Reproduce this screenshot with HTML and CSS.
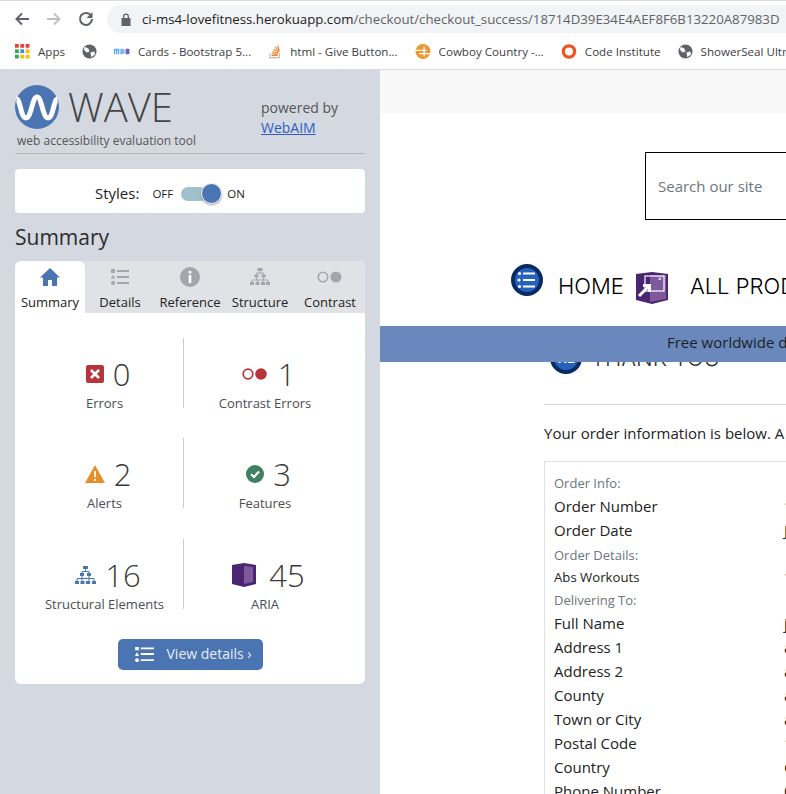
FILE: index.html
```html
<!DOCTYPE html>
<html lang="en">
<head>
    <meta charset="UTF-8">
    <meta name="viewport" content="width=device-width, initial-scale=1.0">
    <title>WAVE - Love Fitness checkout</title>
    <link rel="stylesheet" href="styles.css">
</head>
<body>
    <div class="toolbar">
        <svg class="nav-arrow" viewBox="0 0 16 16"><path d="M15 8H3M8 2.5 2.5 8 8 13.5" fill="none" stroke="#5f6368" stroke-width="2"/></svg>
        <svg class="nav-arrow" viewBox="0 0 16 16"><path d="M1 8h12M8 2.5 13.5 8 8 13.5" fill="none" stroke="#bdc1c6" stroke-width="2"/></svg>
        <svg class="nav-arrow" viewBox="0 0 16 16"><path d="M13 4.6A6 6 0 1 0 14 8" fill="none" stroke="#5f6368" stroke-width="2"/><path d="M14.5 1v6h-6z" fill="#5f6368"/></svg>
        <div class="address">
            <svg class="lock" viewBox="0 0 10 13"><path d="M2 5V3.5a3 3 0 0 1 6 0V5h1.500v8H.5V5zm1.300 0h3.400V3.500a1.700 1.700 0 0 0-3.400 0z" fill="#5f6368"/></svg>
            <span class="url"><span class="host">ci-ms4-lovefitness.herokuapp.com</span>/checkout/checkout_success/18714D39E34E4AEF8F6B13220A87983D</span>
        </div>
    </div>

    <div class="bookmarks">
        <a class="bookmark">
            <svg class="bm-icon" viewBox="0 0 14 14">
                <rect x="0" y="0" width="3.500" height="3.500" fill="#ea4335"/><rect x="5" y="0" width="3.500" height="3.500" fill="#ea4335"/><rect x="10" y="0" width="3.500" height="3.500" fill="#ea4335"/>
                <rect x="0" y="5" width="3.500" height="3.500" fill="#34a853"/><rect x="5" y="5" width="3.500" height="3.500" fill="#4285f4"/><rect x="10" y="5" width="3.500" height="3.500" fill="#fbbc05"/>
                <rect x="0" y="10" width="3.500" height="3.500" fill="#34a853"/><rect x="5" y="10" width="3.500" height="3.500" fill="#fbbc05"/><rect x="10" y="10" width="3.500" height="3.500" fill="#fbbc05"/>
            </svg>
            Apps
        </a>
        <a class="bookmark"><svg class="bm-icon" viewBox="0 0 16 16"><circle cx="8" cy="8" r="7.500" fill="#5f6368"/><path d="M3 3l4 2 1 3-3 1-3-3zM9 9l4-1 1 3-4 3z" fill="#fff"/></svg></a>
        <a class="bookmark"><svg class="bm-icon wide" viewBox="0 0 18 8"><path d="M0 1h6v6H4.500V3H3.700v4H2.300V3H1.500v4H0z" fill="#5dadec"/><path d="M7 1h3.500L12 3v2l-1.500 2H7z" fill="#7fb8ee"/><path d="M13 1h3.500L18 2.500 17 4l1 1.500L16.500 7H13z" fill="#6f5fc7"/></svg>Cards - Bootstrap 5...</a>
        <a class="bookmark"><svg class="bm-icon narrow" viewBox="0 0 16 16"><path d="M2 10v5h11v-5" fill="none" stroke="#bcbbbb" stroke-width="1.300"/><path d="M4 12.500h7M4.200 10.300l6.800.8M5 8l6.500 2M6.500 5.500l5.500 3.500M8.500 3l4 5M11 1l2 6.500" fill="none" stroke="#f48024" stroke-width="1.300"/></svg>html - Give Button...</a>
        <a class="bookmark"><svg class="bm-icon wide" viewBox="0 0 16 16"><circle cx="8" cy="8" r="8" fill="#f0962e"/><path d="M0 6h12v1.500H0zM4 9.500h12V11H4zM8.500 3h1.500v10H8.500z" fill="#fff"/></svg>Cowboy Country -...</a>
        <a class="bookmark"><svg class="bm-icon wide" viewBox="0 0 16 16"><circle cx="8" cy="8" r="6" fill="none" stroke="#f4511e" stroke-width="3.500"/></svg>Code Institute</a>
        <a class="bookmark"><svg class="bm-icon" viewBox="0 0 16 16"><circle cx="8" cy="8" r="7.500" fill="#5f6368"/><path d="M3 3l4 2 1 3-3 1-3-3zM9 9l4-1 1 3-4 3z" fill="#fff"/></svg>ShowerSeal Ultra</a>
    </div>

    <div class="main">
        <aside class="wave">
            <div class="wave-head">
                <div class="brand">
                    <div class="brand-row">
                        <svg class="wave-logo" viewBox="0 0 44 44"><circle cx="22" cy="22" r="22" fill="#4b74b2"/><path d="M1.500 14c4 0 4 19 9.500 19S17 12 22 12s5.500 21 11 21 5.500-19 9.500-19" fill="none" stroke="#fff" stroke-width="5"/></svg>
                        <span class="wave-title">WAVE</span>
                    </div>
                    <div class="tagline">web accessibility evaluation tool</div>
                </div>
                <div class="powered">powered by<br><a href="#">WebAIM</a></div>
            </div>

            <div class="styles-card">
                <span class="styles-label">Styles:</span>
                <span class="switch-text">OFF</span>
                <span class="switch"><span class="knob"></span></span>
                <span class="switch-text">ON</span>
            </div>

            <h2 class="panel-title">Summary</h2>

            <div class="panel">
                <div class="tabs">
                    <div class="tab active">
                        <svg class="tab-icon" viewBox="0 0 20 20"><path d="M10 1 0 10.500h3V19h5v-6h4v6h5v-8.500h3z" fill="#4b74b2"/></svg>
                        Summary
                    </div>
                    <div class="tab">
                        <svg class="tab-icon" viewBox="0 0 20 20"><path d="M1 2h4v4H1zM7 3h12v2H7zM3 8l2.200 3.500H.8zM7 9h12v2H7zM7 15h12v2H7z" fill="#a3a6ab"/><circle cx="3" cy="16" r="2" fill="#a3a6ab"/></svg>
                        Details
                    </div>
                    <div class="tab">
                        <svg class="tab-icon" viewBox="0 0 20 20"><circle cx="10" cy="10" r="10" fill="#a3a6ab"/><path d="M8.700 4h2.600v2.500H8.700zM8.700 8h2.600v8H8.700z" fill="#fff"/></svg>
                        Reference
                    </div>
                    <div class="tab">
                        <svg class="tab-icon" viewBox="0 0 20 20"><path d="M7.500 1h5v3h-5zM4.500 7.500h4v3h-4zM11.500 7.500h4v3h-4zM0 15h4v3H0zM5.500 15h4v3h-4zM11 15h4v3h-4zM16 15h4v3h-4z" fill="#a3a6ab"/><path d="M10 4v2.500M6.500 6v1.500M13.500 6v1.500M6.500 6h7M2 15v-2h16v2M6.500 10.500V13M13.500 10.500V13M7.500 13v2M13 13v2" fill="none" stroke="#a3a6ab"/></svg>
                        Structure
                    </div>
                    <div class="tab">
                        <svg class="tab-icon contrast" viewBox="0 0 26 12"><circle cx="6" cy="6" r="4.700" fill="none" stroke="#a3a6ab" stroke-width="1.600"/><circle cx="19" cy="6" r="5.500" fill="#a3a6ab"/></svg>
                        Contrast
                    </div>
                </div>

                <div class="stats">
                    <div class="stat">
                        <div class="stat-top">
                            <svg class="stat-icon" viewBox="0 0 18 18"><rect width="18" height="18" rx="2" fill="#b7353a"/><path d="M5 5l8 8M13 5l-8 8" stroke="#fff" stroke-width="2.600"/></svg>
                            <span class="stat-num">0</span>
                        </div>
                        <div class="stat-label">Errors</div>
                    </div>
                    <div class="stat">
                        <div class="stat-top wide-gap">
                            <svg class="stat-icon contrast-err" viewBox="0 0 25 12"><circle cx="6" cy="6" r="4.800" fill="none" stroke="#b7353a" stroke-width="1.700"/><circle cx="19" cy="6" r="5.800" fill="#b7353a"/></svg>
                            <span class="stat-num">1</span>
                        </div>
                        <div class="stat-label">Contrast Errors</div>
                    </div>
                    <div class="stat">
                        <div class="stat-top">
                            <svg class="stat-icon alert" viewBox="0 0 20 18"><path d="M10 0 20 18H0z" fill="#e68f28"/><path d="M9 6h2l-.3 6.500H9.300zM9 14h2v2H9z" fill="#fff"/></svg>
                            <span class="stat-num">2</span>
                        </div>
                        <div class="stat-label">Alerts</div>
                    </div>
                    <div class="stat">
                        <div class="stat-top">
                            <svg class="stat-icon" viewBox="0 0 18 18"><circle cx="9" cy="9" r="9" fill="#3f7f62"/><path d="M5 9.300l3 2.700 5-5.500" fill="none" stroke="#fff" stroke-width="2.200"/></svg>
                            <span class="stat-num">3</span>
                        </div>
                        <div class="stat-label">Features</div>
                    </div>
                    <div class="stat">
                        <div class="stat-top">
                            <svg class="stat-icon struct" viewBox="0 0 21 20"><path d="M8 1h5v3H8zM5 8h4v3H5zM12 8h4v3h-4zM0 16h4v3H0zM5.500 16h4v3h-4zM11 16h4v3h-4zM17 16h4v3h-4z" fill="#4b74b2"/><path d="M10.500 4v2.500M7 6.500h7M7 6.500V8M14 6.500V8M2 16v-2.500h17V16M7 11v5M14 11v5" fill="none" stroke="#4b74b2"/></svg>
                            <span class="stat-num">16</span>
                        </div>
                        <div class="stat-label">Structural Elements</div>
                    </div>
                    <div class="stat">
                        <div class="stat-top wide-gap">
                            <svg class="stat-icon aria" viewBox="0 0 24 24"><path d="M0 2 12 0l12 2v19l-12 3-12-3z" fill="#4b2571"/><path d="M12 3l9 1v15l-9 2z" fill="#7e5a9b"/></svg>
                            <span class="stat-num">45</span>
                        </div>
                        <div class="stat-label">ARIA</div>
                    </div>
                </div>

                <div class="details-row">
                    <a class="details-btn">
                        <svg class="btn-icon" viewBox="0 0 20 16"><path d="M0 0h4v3.500H0zM6 .5h14v2H6zM2 5.500l2.200 4H-.2zM6 6.500h14v2H6zM6 13h14v2H6z" fill="#fff"/><circle cx="2" cy="14" r="2" fill="#fff"/></svg>
                        <span class="btn-text">View details ›</span>
                    </a>
                </div>
            </div>
        </aside>

        <main class="page">
            <div class="page-strip"></div>
            <div class="search-row">
                <div class="search-box">Search our site</div>
            </div>
            <nav class="site-nav">
                <svg class="nav-icon list-icon" viewBox="0 0 32 32"><circle cx="16" cy="16" r="14" fill="#2563bb" stroke="#0b2a63" stroke-width="4"/><path d="M12 9.500h12M12 16h12M12 22.500h12" stroke="#fff" stroke-width="2.200"/><circle cx="8.500" cy="9.500" r="1.600" fill="#fff"/><circle cx="8" cy="16" r="1.600" fill="#fff"/><circle cx="8.500" cy="22.500" r="1.600" fill="#fff"/></svg>
                <span class="nav-link">HOME</span>
                <svg class="nav-icon box-icon" viewBox="0 0 32 32"><path d="M0 2 16 0l16 2v26l-16 4-16-4z" fill="#4b2571"/><path d="M14 3l16 0v24l-16 3z" fill="#7e5a9b"/><rect x="9" y="4" width="19" height="15" fill="none" stroke="#fff" stroke-width="1.200"/><path d="M25 5.500l-2.500 2.500M22.500 5.500 25 8" stroke="#fff"/><path d="M3 24 13 14M7 13.500h6.500V20" fill="none" stroke="#fff" stroke-width="3"/></svg>
                <span class="nav-link">ALL PRODUCTS</span>
            </nav>
            <div class="banner">Free worldwide delivery on all orders over $50</div>
            <div class="content">
                <div class="thanks">
                    <svg class="thanks-icon" viewBox="0 0 32 32"><circle cx="16" cy="16" r="14" fill="#2563bb" stroke="#0b2a63" stroke-width="4"/><text class="h2-badge" x="16" y="21" text-anchor="middle">H2</text></svg>
                    <span class="thanks-text">THANK YOU</span>
                </div>
                <hr class="rule">
                <p class="intro">Your order information is below. A confirmation email will be sent to you.</p>
                <div class="order">
                    <div class="order-head">Order Info:</div>
                    <div class="order-row"><span>Order Number</span><span>18714D39E34E4AEF</span></div>
                    <div class="order-row"><span>Order Date</span><span>Jan 12 2022</span></div>
                    <div class="order-head spaced">Order Details:</div>
                    <div class="order-row small"><span>Abs Workouts</span><span>1 x 9.99</span></div>
                    <div class="order-head">Delivering To:</div>
                    <div class="order-row"><span>Full Name</span><span>jane doe</span></div>
                    <div class="order-row"><span>Address 1</span><span>aaa</span></div>
                    <div class="order-row"><span>Address 2</span><span>aaa</span></div>
                    <div class="order-row"><span>County</span><span>aaa</span></div>
                    <div class="order-row"><span>Town or City</span><span>aaa</span></div>
                    <div class="order-row"><span>Postal Code</span><span>123</span></div>
                    <div class="order-row"><span>Country</span><span>GB</span></div>
                    <div class="order-row"><span>Phone Number</span><span>0123</span></div>
                </div>
            </div>
        </main>
    </div>
</body>
</html>
```

FILE: styles.css
```css
* {
    margin: 0;
    padding: 0;
    box-sizing: border-box;
}

html, body {
    width: 786px;
    height: 794px;
    overflow: hidden;
}

body {
    font-family: "Open Sans", sans-serif;
    background-color: #fff;
    color: #333;
}

/* browser chrome */
.toolbar {
    height: 35px;
    padding: 5px 0 0 14px;
    display: flex;
    align-items: flex-start;
    border-top: 1px solid #dadce0;
    background-color: #fff;
}

.nav-arrow {
    width: 16px;
    height: 16px;
    margin: 5px 16px 0 0;
    flex-shrink: 0;
}

.address {
    flex: 1;
    height: 28px;
    margin: -1px 0 0 -3px;
    padding-left: 14px;
    display: flex;
    align-items: center;
    gap: 11px;
    background-color: #f1f3f4;
    border-radius: 14px 0 0 14px;
    overflow: hidden;
    white-space: nowrap;
}

.lock {
    width: 10px;
    height: 13px;
    flex-shrink: 0;
}

.url {
    font-size: 13.240px;
    color: #5f6368;
}

.host {
    color: #202124;
}

.bookmarks {
    height: 35px;
    padding: 0 0 2px 15px;
    display: flex;
    align-items: center;
    gap: 17px;
    background-color: #fff;
    border-bottom: 1px solid #d9dbde;
    white-space: nowrap;
    overflow: hidden;
    font-size: 11.600px;
    color: #3c4043;
}

.bookmark {
    display: flex;
    align-items: center;
    gap: 8px;
    flex-shrink: 0;
}

.bm-icon {
    width: 15px;
    height: 15px;
    flex-shrink: 0;
}

.bm-icon.wide {
    width: 16px;
}

.bm-icon.narrow {
    width: 14px;
}

/* layout */
.main {
    display: flex;
    height: 724px;
}

/* wave sidebar */
.wave {
    width: 380px;
    flex-shrink: 0;
    padding: 15px 15px 0;
    background-color: #d4d8e0;
}

.wave-head {
    display: flex;
    justify-content: space-between;
    height: 69px;
    border-bottom: 1px solid #b4b7b9;
}

.brand-row {
    display: flex;
    align-items: center;
    gap: 9px;
    height: 44px;
}

.wave-logo {
    width: 44px;
    height: 44px;
}

.wave-title {
    font-size: 40px;
    font-weight: 300;
    color: #444;
    line-height: 44px;
}

.tagline {
    margin: 3px 0 0 2px;
    font-size: 12px;
    color: #555;
}

.powered {
    width: 104px;
    margin-top: 13px;
    font-size: 14px;
    line-height: 20px;
    color: #555;
}

.powered a {
    color: #2f5fc0;
}

.styles-card {
    height: 44px;
    margin-top: 15px;
    padding: 5px 0 0 80px;
    display: flex;
    align-items: center;
    background-color: #fff;
    border-radius: 4px;
    color: #222;
}

.styles-label {
    font-size: 15px;
    line-height: 20px;
    margin: -2px 13px 0 0;
}

.switch-text {
    font-size: 11.500px;
}

.switch {
    position: relative;
    width: 26px;
    height: 14px;
    margin: 0 20px 0 8px;
    background-color: #a0c0cc;
    border-radius: 7px;
}

.knob {
    position: absolute;
    top: -4px;
    right: -15px;
    width: 21px;
    height: 21px;
    background-color: #4b74b2;
    border: 1px solid #fff;
    border-radius: 50%;
    box-shadow: 0 1px 2px rgba(0, 0, 0, 0.4);
}

.panel-title {
    margin-top: 10px;
    font-size: 21px;
    font-weight: 400;
    line-height: 29px;
    color: #2c2c2c;
}

.panel {
    margin-top: 9px;
    background-color: #fff;
    border-radius: 6px;
    overflow: hidden;
    height: 423px;
}

.tabs {
    display: flex;
    height: 52px;
    background-color: #e0e2e6;
}

.tab {
    width: 70px;
    padding-top: 6px;
    display: flex;
    flex-direction: column;
    align-items: center;
    gap: 7px;
    font-size: 13px;
    line-height: 17px;
    color: #222;
    white-space: nowrap;
}

.tab.active {
    background-color: #fff;
    border-radius: 6px 6px 0 0;
}

.tab-icon {
    width: 20px;
    height: 20px;
}

.tab-icon.contrast {
    width: 26px;
}

.stats {
    display: grid;
    grid-template-columns: 169px 1fr;
    grid-auto-rows: 70px;
    row-gap: 30px;
    padding-top: 25px;
}

.stat {
    display: flex;
    flex-direction: column;
    align-items: center;
    padding-top: 20px;
}

.stat:nth-child(odd) {
    border-right: 1px solid #ccc;
    padding-left: 11px;
}

.stat:nth-child(even) {
    padding-right: 19px;
}

.stat:nth-child(n+5) {
    margin: 1px 0 -1px;
}

.stat-top {
    display: flex;
    align-items: center;
    gap: 9px;
    height: 32px;
    padding-left: 7px;
}

.stat-top.wide-gap {
    gap: 11px;
}

.stat-icon {
    width: 18px;
    height: 18px;
}

.stat-icon.contrast-err {
    width: 25px;
    height: 12px;
}

.stat-icon.alert {
    width: 20px;
}

.stat-icon.struct {
    width: 21px;
    height: 20px;
}

.stat-icon.aria {
    width: 24px;
    height: 24px;
    margin-right: 2px;
}

.stat-num {
    font-size: 31px;
    font-weight: 300;
    line-height: 32px;
    color: #3a3a3a;
}

.stat-label {
    margin-top: 4px;
    font-size: 13px;
    color: #4a4d55;
    white-space: nowrap;
}

.details-row {
    display: flex;
    justify-content: center;
    margin-top: 31px;
}

.details-btn {
    width: 145px;
    height: 31px;
    padding-left: 17px;
    display: flex;
    align-items: center;
    gap: 13px;
    background-color: #4b74b2;
    border-radius: 5px;
    color: #e8eef7;
    font-size: 14px;
}

.btn-text {
    margin-top: -2px;
}

.btn-icon {
    width: 19px;
    height: 15px;
}

/* site page */
.page {
    flex: 1;
    min-width: 0;
    overflow: hidden;
    white-space: nowrap;
    background-color: #fff;
}

.page-strip {
    height: 43px;
    background-color: #f8f8f8;
}

.search-row {
    padding: 39px 0 0 265px;
}

.search-box {
    width: 300px;
    height: 68px;
    padding-left: 12px;
    display: flex;
    align-items: center;
    border: 1px solid #000;
    font-size: 15px;
    color: #6c757d;
}

.site-nav {
    height: 106px;
    padding: 44px 0 0 131px;
    display: flex;
    align-items: flex-start;
}

.nav-icon {
    width: 32px;
    height: 32px;
    flex-shrink: 0;
}

.nav-link {
    font-family: Inter, sans-serif;
    font-weight: 300;
    font-size: 22px;
    color: #000;
    line-height: 32px;
    margin-top: 6px;
}

.list-icon {
    margin-right: 15px;
}

.box-icon {
    margin: 8px 22px 0 12px;
}

.banner {
    position: relative;
    z-index: 1;
    width: 800px;
    height: 36px;
    padding-left: 287px;
    line-height: 33px;
    background-color: #6a88bb;
    font-size: 15px;
    color: #1a1f2c;
}

.content {
    padding-left: 164px;
}

.thanks {
    height: 61px;
    margin-top: -20px;
    padding-left: 6px;
    display: flex;
    align-items: flex-start;
    gap: 9px;
}

.thanks-icon {
    width: 32px;
    height: 32px;
    flex-shrink: 0;
}

.h2-badge {
    font-size: 13px;
    font-weight: 700;
    fill: #fff;
}

.thanks-text {
    font-family: Inter, sans-serif;
    font-size: 22px;
    font-weight: 300;
    color: #333;
    line-height: 30px;
    margin-top: 1px;
}

.rule {
    width: 300px;
    border: none;
    border-top: 1px solid #d5d7da;
    margin-top: 1px;
}

.intro {
    margin-top: 17px;
    font-size: 15px;
    line-height: 22px;
    color: #222;
}

.order {
    width: 300px;
    margin-top: 17px;
    padding: 10px 0 0 9px;
    border: 1px solid #dee2e6;
}

.order-head {
    height: 22px;
    font-size: 13px;
    line-height: 22px;
    color: #6c757d;
}

.order-head.spaced {
    margin-top: 2px;
}

.order-row {
    display: flex;
    height: 24px;
    font-size: 15px;
    line-height: 24px;
    color: #222;
}

.order-row.small {
    font-size: 13.200px;
    line-height: 22px;
    height: 23px;
}

.order-row span:first-child {
    width: 230px;
    flex-shrink: 0;
}
```
